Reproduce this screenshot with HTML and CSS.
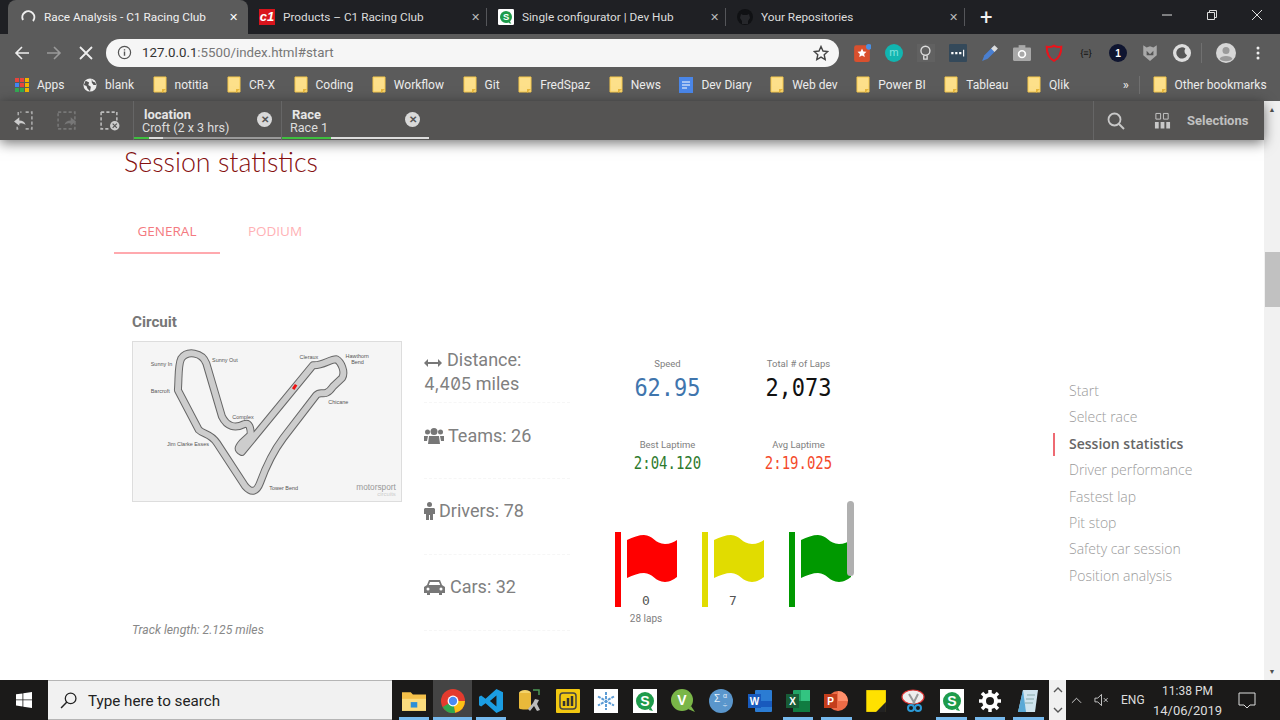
FILE: index.html
```html
<!DOCTYPE html>
<html>
<head>
  <meta charset="UTF-8">
  <title>Race Analysis - C1 Racing Club</title>
  <link rel="stylesheet" href="styles.css">
</head>
<body>
  <svg class="defs" width="0" height="0">
    <symbol id="folder" viewBox="0 0 14 18"><path d="M1 1h8l0 0h4v15H1z" fill="#fde08a" stroke="#f5c84c"/><path d="M9 17l4-4H9z" fill="#e7b73c"/></symbol>
    <symbol id="flagwave" viewBox="0 0 50 47"><path d="M0 5C6 2 12 0 17 0c9 0 11 9 21 9 5 0 9-2 12-4v37c-3 2-7 5-12 5-10 0-12-9-21-9-5 0-11 2-17 5z"/></symbol>
  </svg>

  <div class="tabstrip">
    <div class="tab active">
      <svg class="tab-ico" viewBox="0 0 16 16"><path d="M3 11A6 6 0 1 1 13 12" fill="none" stroke="#eee" stroke-width="2"/></svg>
      <span class="tab-title">Race Analysis - C1 Racing Club</span><span class="tab-x">✕</span>
    </div>
    <div class="tab sep">
      <span class="c1-logo">c1</span>
      <span class="tab-title">Products – C1 Racing Club</span><span class="tab-x">✕</span>
    </div>
    <div class="tab sep">
      <svg class="tab-ico" viewBox="0 0 24 24"><rect width="24" height="24" rx="2" fill="#fff"/><circle cx="12" cy="12" r="9" fill="#1e9b4b"/><path d="M16 21l4 1-3-5z" fill="#1e9b4b"/><text x="12" y="17" text-anchor="middle" font-size="14" font-weight="700" font-family="Liberation Sans" fill="#fff">S</text></svg>
      <span class="tab-title">Single configurator | Dev Hub</span><span class="tab-x">✕</span>
    </div>
    <div class="tab sep">
      <svg class="tab-ico" viewBox="0 0 16 16"><circle cx="8" cy="8" r="8" fill="#101114"/><path d="M5 15v-3L3 9l1-4 2 1h4l2-1 1 4-2 3v3z" fill="#26272b"/></svg>
      <span class="tab-title">Your Repositories</span><span class="tab-x">✕</span>
    </div>
    <span class="new-tab">+</span>
    <div class="win-btns">
      <svg viewBox="0 0 12 12"><path d="M1 6h10" stroke="#ddd"/></svg>
      <svg viewBox="0 0 12 12"><path d="M1.500 3.500h7v7h-7zM3.500 3V1.500h7v7H9" fill="none" stroke="#ddd"/></svg>
      <svg viewBox="0 0 12 12"><path d="M1 1l10 10M11 1L1 11" stroke="#ddd"/></svg>
    </div>
  </div>

  <div class="toolbar">
    <svg class="nav-ico" viewBox="0 0 16 16"><path d="M15 8H2M8 2L2 8l6 6" fill="none" stroke="#eee" stroke-width="1.600"/></svg>
    <svg class="nav-ico" viewBox="0 0 16 16"><path d="M1 8h13M8 2l6 6-6 6" fill="none" stroke="#9a9a9a" stroke-width="1.600"/></svg>
    <svg class="nav-ico" viewBox="0 0 16 16"><path d="M2 2l12 12M14 2L2 14" stroke="#eee" stroke-width="1.800"/></svg>
    <div class="omnibox">
      <svg class="info" viewBox="0 0 16 16"><circle cx="8" cy="8" r="6.500" fill="none" stroke="#555" stroke-width="1.300"/><path d="M8 7v4.500M8 4.500v1.300" stroke="#555" stroke-width="1.500"/></svg>
      <span class="url">127.0.0.1<span class="url-dim">:5500/index.html#start</span></span>
      <svg class="star" viewBox="0 0 16 16"><path d="M8 1.500l2 4.500 4.800.5-3.600 3.200 1 4.800L8 12.100l-4.200 2.400 1-4.800L1.200 6.500 6 6z" fill="none" stroke="#444" stroke-width="1.400"/></svg>
    </div>
    <div class="ext-row">
      <svg viewBox="0 0 16 16"><rect x="1" y="1" width="14" height="15" rx="2" fill="#d9502e"/><path d="M8 4l1.200 2.600 2.800.3-2.100 1.900.6 2.800L8 10.200l-2.500 1.400.6-2.800L4 6.900l2.800-.3z" fill="#fff"/><circle cx="14" cy="2.500" r="2.500" fill="#4a90e2"/></svg>
      <svg viewBox="0 0 16 16"><circle cx="8" cy="8" r="8" fill="#12b5b0"/><text x="8" y="11" text-anchor="middle" font-size="10" fill="#7fe3df" font-family="Liberation Sans">m</text></svg>
      <svg viewBox="0 0 16 16"><rect width="16" height="16" fill="#616161"/><circle cx="7.500" cy="6" r="4" fill="none" stroke="#ddd" stroke-width="1.200"/><path d="M6 10.500v3h3v-3" fill="none" stroke="#ddd" stroke-width="1.200"/></svg>
      <svg viewBox="0 0 16 16"><rect width="16" height="16" rx="1" fill="#34495a"/><path d="M2 8h2M5.500 8h2M9 8h2" stroke="#fff" stroke-width="2"/><path d="M13 5v6" stroke="#fff"/></svg>
      <svg viewBox="0 0 16 16"><path d="M1 15l2-5 8-8 3 3-8 8z" fill="#4a7fd0"/><path d="M9 4l3-3 3 3-3 3z" fill="#ddd"/></svg>
      <svg viewBox="0 0 16 16"><rect y="3" width="16" height="12" rx="1" fill="#a8a8a8"/><rect x="5" y="1" width="6" height="3" fill="#a8a8a8"/><circle cx="8" cy="9" r="3" fill="none" stroke="#fff" stroke-width="1.500"/></svg>
      <svg viewBox="0 0 16 16"><path d="M8 15C3 12.500 1.500 8 1.500 2.500 4 3 6 2.800 8 1.500c2 1.300 4 1.500 6.500 1 0 5.500-1.500 10-6.500 12.500z" fill="none" stroke="#e8141c" stroke-width="1.800"/></svg>
      <span class="ext-text">{≡}</span>
      <svg viewBox="0 0 16 16"><circle cx="8" cy="8" r="8" fill="#0f1530"/><text x="8" y="11.500" text-anchor="middle" font-size="9" font-weight="700" fill="#fff" font-family="Liberation Sans">1</text></svg>
      <svg viewBox="0 0 16 16"><path d="M2 1l3 2 3-1 3 1 3-2v9l-6 5-6-5z" fill="#a9a9a9"/><path d="M5 6l3 3 3-3v4H5z" fill="#555"/></svg>
      <svg viewBox="0 0 16 16"><circle cx="8" cy="8" r="8" fill="#ddd"/><path d="M11 4a5 5 0 1 0 1.500 6A4 4 0 0 1 11 4z" fill="#555"/></svg>
      <span class="ext-sep"></span>
      <svg class="avatar" viewBox="0 0 20 20"><circle cx="10" cy="10" r="10" fill="#d6d6d6"/><circle cx="10" cy="7.500" r="3.500" fill="#9a9a9a"/><path d="M3.500 16c1-4 12-4 13 0-3 3-10 3-13 0z" fill="#9a9a9a"/></svg>
      <svg class="dots" viewBox="0 0 4 16"><circle cx="2" cy="3" r="1.500" fill="#eee"/><circle cx="2" cy="8" r="1.500" fill="#eee"/><circle cx="2" cy="13" r="1.500" fill="#eee"/></svg>
    </div>
  </div>

  <div class="bookmarks">
    <div class="bm bm-first">
      <svg class="bm-ico" viewBox="0 0 14 14"><g><rect width="4" height="4" fill="#e8453c"/><rect x="5" width="4" height="4" fill="#e8453c"/><rect x="10" width="4" height="4" fill="#f4b400"/><rect y="5" width="4" height="4" fill="#4285f4"/><rect x="5" y="5" width="4" height="4" fill="#e8453c"/><rect x="10" y="5" width="4" height="4" fill="#f4b400"/><rect y="10" width="4" height="4" fill="#34a853"/><rect x="5" y="10" width="4" height="4" fill="#34a853"/><rect x="10" y="10" width="4" height="4" fill="#f4b400"/></g></svg>Apps
    </div>
    <div class="bm">
      <svg class="bm-ico" viewBox="0 0 16 16"><circle cx="8" cy="8" r="7.500" fill="#eee"/><path d="M3 3l4 2-1 3 3 2-1 5-3-3-1-3-3-1zM10 1l1 3 3 1 1 3-3 0-2-3z" fill="#555"/></svg>blank
    </div>
    <div class="bm"><svg class="bm-ico"><use href="#folder"/></svg>notitia</div>
    <div class="bm"><svg class="bm-ico"><use href="#folder"/></svg>CR-X</div>
    <div class="bm"><svg class="bm-ico"><use href="#folder"/></svg>Coding</div>
    <div class="bm"><svg class="bm-ico"><use href="#folder"/></svg>Workflow</div>
    <div class="bm"><svg class="bm-ico"><use href="#folder"/></svg>Git</div>
    <div class="bm"><svg class="bm-ico"><use href="#folder"/></svg>FredSpaz</div>
    <div class="bm"><svg class="bm-ico"><use href="#folder"/></svg>News</div>
    <div class="bm">
      <svg class="bm-ico" viewBox="0 0 14 18"><path d="M0 1h14v16H0z" fill="#4a86e8"/><path d="M3 6h8M3 9h8M3 12h5" stroke="#fff"/></svg>Dev Diary
    </div>
    <div class="bm"><svg class="bm-ico"><use href="#folder"/></svg>Web dev</div>
    <div class="bm"><svg class="bm-ico"><use href="#folder"/></svg>Power BI</div>
    <div class="bm"><svg class="bm-ico"><use href="#folder"/></svg>Tableau</div>
    <div class="bm"><svg class="bm-ico"><use href="#folder"/></svg>Qlik</div>
    <span class="bm-more">»</span>
    <div class="bm bm-other"><svg class="bm-ico"><use href="#folder"/></svg>Other bookmarks</div>
  </div>

  <div class="lower">
    <div class="view">
      <div class="qlik-bar">
        <div class="qlik-tools">
          <svg viewBox="0 0 20 20"><path d="M5 5V2h3M12 2h6v16h-6M5 18H4v-2" fill="none" stroke="#aaa" stroke-dasharray="3 2" stroke-width="1.500"/><path d="M1 11l5-4v3c3 0 5 1 6 4-2-1-3-2-6-1v2z" fill="#ccc"/></svg>
          <svg viewBox="0 0 20 20"><path d="M2 2h16v16H2z" fill="none" stroke="#777" stroke-dasharray="3 2" stroke-width="1.500"/><path d="M19 11l-5-4v3c-3 0-5 1-6 4 2-1 3-2 6-1v2z" fill="#777"/></svg>
          <svg viewBox="0 0 20 20"><path d="M2 2h15v9M9 18H2V2" fill="none" stroke="#bbb" stroke-dasharray="3 2" stroke-width="1.500"/><circle cx="15" cy="15" r="4.500" fill="#ccc"/><path d="M13 13l4 4M17 13l-4 4" stroke="#555" stroke-width="1.200"/></svg>
        </div>
        <div class="sel-tab">
          <div class="sel-text"><b>location</b><span>Croft (2 x 3 hrs)</span></div>
          <span class="sel-x">✕</span>
          <div class="sel-bar sel-bar-a"></div>
        </div>
        <div class="sel-tab">
          <div class="sel-text"><b>Race</b><span>Race 1</span></div>
          <span class="sel-x">✕</span>
          <div class="sel-bar sel-bar-b"></div>
        </div>
        <div class="qlik-right">
          <svg class="q-search" viewBox="0 0 18 18"><circle cx="7.500" cy="7.500" r="6" fill="none" stroke="#c8c8c8" stroke-width="1.800"/><path d="M12 12l5 5" stroke="#c8c8c8" stroke-width="2"/></svg>
          <svg class="q-sel" viewBox="0 0 18 18"><path d="M2 1h5v6H2zM10 1h5v6h-5z" fill="none" stroke="#c8c8c8"/><path d="M1 10h4v7H1zM7 10h4v7H7zM13 10h4v7h-4z" fill="#c8c8c8"/></svg>
          <b>Selections</b>
        </div>
      </div>

      <div class="page">
        <h2 class="title">Session statistics</h2>
        <div class="page-tabs">
          <div class="page-tab on">GENERAL</div>
          <div class="page-tab">PODIUM</div>
        </div>

        <div class="panel">
          <div class="circuit">
            <div class="circuit-head">Circuit</div>
            <svg class="map" viewBox="37 20 808 480">
              <rect x="37" y="20" width="808" height="480" fill="#f5f5f5"/>
              <path d="M365 352C352 345 352 340 365 325L392 300C392 280 388 262 372 268 345 282 320 276 305 245L258 85C245 50 200 45 182 70 172 90 175 130 172 165L235 285C250 300 270 295 290 325L375 455C395 478 410 472 420 445 440 390 460 350 490 310L590 180C605 165 615 190 640 155L668 128C678 110 665 80 650 72 630 72 610 92 580 90Z" fill="none" stroke="#666" stroke-width="24" stroke-linejoin="round"/>
              <path d="M365 352C352 345 352 340 365 325L392 300C392 280 388 262 372 268 345 282 320 276 305 245L258 85C245 50 200 45 182 70 172 90 175 130 172 165L235 285C250 300 270 295 290 325L375 455C395 478 410 472 420 445 440 390 460 350 490 310L590 180C605 165 615 190 640 155L668 128C678 110 665 80 650 72 630 72 610 92 580 90Z" fill="none" stroke="#cdcdcd" stroke-width="18" stroke-linejoin="round"/>
              <path d="M520 162l9-13" stroke="#ee1111" stroke-width="9"/>
              <g class="map-labels">
                <text x="90" y="91">Sunny In</text>
                <text x="275" y="79">Sunny Out</text>
                <text x="90" y="173">Barcroft</text>
                <text x="336" y="252">Complex</text>
                <text x="539" y="72">Cleraux</text>
                <text x="678" y="69">Hawthorn</text>
                <text x="695" y="86">Bend</text>
                <text x="626" y="208">Chicane</text>
                <text x="139" y="333">Jim Clarke Esses</text>
                <text x="448" y="468">Tower Bend</text>
              </g>
              <text class="map-brand" x="830" y="466" text-anchor="end">motorsport</text>
              <text class="map-brand2" x="830" y="485" text-anchor="end">circuits</text>
            </svg>
            <div class="track-len">Track length: 2.125 miles</div>
          </div>

          <div class="stats">
            <div class="stat stat-first">
              <svg class="s-ico s-arrow" viewBox="0 0 18 10"><path d="M0 5l4-4v3h10V1l4 4-4 4V6H4v3z" fill="#777"/></svg>Distance:<br><span class="num">4,405</span> miles
            </div>
            <div class="stat">
              <svg class="s-ico s-team" viewBox="0 0 20 17"><circle cx="10" cy="4.500" r="3.500" fill="#777"/><circle cx="3.500" cy="5" r="2.500" fill="#777"/><circle cx="16.500" cy="5" r="2.500" fill="#777"/><path d="M5 9h10l1 8H4zM0 9h4l-1 5H0zM16 9h4v5h-3z" fill="#777"/></svg>Teams: 26
            </div>
            <div class="stat">
              <svg class="s-ico s-man" viewBox="0 0 11 18"><circle cx="5.500" cy="2.500" r="2.500" fill="#777"/><path d="M1 6h9l1 1v5H9v6H6v-5H5v5H2v-6H0V7z" fill="#777"/></svg>Drivers: 78
            </div>
            <div class="stat">
              <svg class="s-ico s-car" viewBox="0 0 21 16"><path d="M5 1h11l2 5 3 2v6h-3v2h-3v-2H6v2H3v-2H0V8l3-2z" fill="#777"/><path d="M6 3h9l1.200 3H4.800z" fill="#fff"/><circle cx="4" cy="10" r="1.500" fill="#fff"/><circle cx="17" cy="10" r="1.500" fill="#fff"/></svg>Cars: 32
            </div>
          </div>

          <div class="kpis">
            <div class="kpi-grid">
              <div class="kpi"><div class="kpi-label">Speed</div><div class="kpi-big blue">62.95</div></div>
              <div class="kpi"><div class="kpi-label">Total # of Laps</div><div class="kpi-big">2,073</div></div>
              <div class="kpi"><div class="kpi-label">Best Laptime</div><div class="kpi-small green">2:04.120</div></div>
              <div class="kpi"><div class="kpi-label">Avg Laptime</div><div class="kpi-small red">2:19.025</div></div>
            </div>
            <div class="flags">
              <div class="flag flag-red">
                <div class="pole"></div>
                <div class="flag-body">
                  <svg class="wave"><use href="#flagwave"/></svg>
                  <div class="flag-num">0</div>
                  <div class="flag-sub">28 laps</div>
                </div>
              </div>
              <div class="flag flag-yellow">
                <div class="pole"></div>
                <div class="flag-body">
                  <svg class="wave"><use href="#flagwave"/></svg>
                  <div class="flag-num">7</div>
                </div>
              </div>
              <div class="flag flag-green">
                <div class="pole"></div>
                <div class="flag-body">
                  <svg class="wave"><use href="#flagwave"/></svg>
                </div>
              </div>
              <div class="flags-thumb"></div>
            </div>
          </div>

          <ul class="side-nav">
            <li>Start</li>
            <li>Select race</li>
            <li class="current">Session statistics</li>
            <li>Driver performance</li>
            <li>Fastest lap</li>
            <li>Pit stop</li>
            <li>Safety car session</li>
            <li>Position analysis</li>
          </ul>
        </div>
      </div>
    </div>

    <div class="scrollbar">
      <span class="sb-arrow">▲</span>
      <div class="sb-thumb"></div>
      <span class="sb-arrow sb-down">▼</span>
    </div>
  </div>

  <div class="taskbar">
    <div class="start">
      <svg viewBox="0 0 16 16"><path d="M0 2.300l6.500-.9v6.100H0zM7.300 1.300L16 0v7.500H7.300zM0 8.300h6.500v6.200L0 13.600zM7.300 8.300H16V16l-8.700-1.200z" fill="#fff"/></svg>
    </div>
    <div class="search">
      <svg viewBox="0 0 16 16"><circle cx="10" cy="6" r="5" fill="none" stroke="#222" stroke-width="1.200"/><path d="M6.500 9.500L1 15" stroke="#222" stroke-width="1.400"/></svg>
      <span>Type here to search</span>
    </div>
    <div class="task-icons">
      <div class="ti on"><svg viewBox="0 0 22 20"><path d="M0 2h8l2 2h12v15H0z" fill="#f4c04a"/><path d="M0 8h22v11H0z" fill="#fbdc7e"/><path d="M8 11h6v5H8z" fill="#2a8fd8"/></svg></div>
      <div class="ti on hot"><svg viewBox="0 0 22 22"><circle cx="11" cy="11" r="11" fill="#e33b2e"/><path d="M11 11L1.500 16.500A11 11 0 0 0 13 21.800z" fill="#2fa84f"/><path d="M11 11h11a11 11 0 0 1-9 10.800z" fill="#fbc116"/><circle cx="11" cy="11" r="5" fill="#fff"/><circle cx="11" cy="11" r="3.800" fill="#4a8af4"/></svg></div>
      <div class="ti on"><svg viewBox="0 0 22 22"><path d="M16 0l6 3v16l-6 3L6 13l-4 3-2-1V7l2-1 4 3zM16 6l-6 5 6 5z" fill="#1b9de2"/></svg></div>
      <div class="ti"><svg viewBox="0 0 24 24"><ellipse cx="8" cy="4" rx="6" ry="3" fill="#f4d36a"/><path d="M2 4v15c0 2 12 2 12 0V4z" fill="#e9b93a"/><path d="M18 10l4 1-2 4 3 6-3 1-3-5-4 5-2-2 5-6z" fill="#bbb"/><path d="M16 1h6v5" fill="none" stroke="#4d9a55" stroke-width="1.500"/></svg></div>
      <div class="ti"><svg viewBox="0 0 24 24"><rect width="24" height="24" rx="1" fill="#f2c811"/><rect x="4" y="4" width="16" height="16" rx="3" fill="none" stroke="#444" stroke-width="1.500"/><path d="M8 12v5M12 9v8M16 7v10" stroke="#333" stroke-width="2.500"/></svg></div>
      <div class="ti"><svg viewBox="0 0 24 24"><rect width="24" height="24" fill="#fff"/><path d="M12 3v18M4 7.500l16 9M20 7.500l-16 9" stroke="#5b9bd5" stroke-width="2" stroke-dasharray="3 1"/></svg></div>
      <div class="ti"><svg viewBox="0 0 24 24"><rect width="24" height="24" fill="#fff"/><circle cx="12" cy="12" r="9" fill="#1e9b4b"/><path d="M16 21l4 1-3-5z" fill="#1e9b4b"/><text x="12" y="17" text-anchor="middle" font-size="14" font-weight="700" font-family="Liberation Sans" fill="#fff">S</text></svg></div>
      <div class="ti"><svg viewBox="0 0 24 24"><circle cx="11" cy="11" r="11" fill="#7ab648"/><path d="M20 17l4 6-7-3z" fill="#7ab648"/><text x="11" y="16" text-anchor="middle" font-size="14" font-weight="700" fill="#fff" font-family="Liberation Sans">V</text></svg></div>
      <div class="ti"><svg viewBox="0 0 24 24"><circle cx="12" cy="12" r="12" fill="#5a96cc"/><text x="8" y="13" text-anchor="middle" font-size="10" fill="#e8f2fa" font-family="Liberation Sans">Σ</text><text x="16" y="9" text-anchor="middle" font-size="7" fill="#e8f2fa" font-family="Liberation Sans">α</text><text x="16" y="19" text-anchor="middle" font-size="8" fill="#e8f2fa" font-family="Liberation Sans">÷</text></svg></div>
      <div class="ti"><svg viewBox="0 0 24 24"><rect x="7" y="1" width="17" height="22" rx="1" fill="#2b7cd3"/><rect x="7" y="12" width="17" height="6" fill="#185abd"/><rect y="5" width="13" height="14" fill="#185abd"/><text x="6.500" y="16" text-anchor="middle" font-size="10" font-weight="700" fill="#fff" font-family="Liberation Sans">W</text></svg></div>
      <div class="ti on"><svg viewBox="0 0 24 24"><rect x="7" y="1" width="17" height="22" rx="1" fill="#21a366"/><rect x="15" y="1" width="9" height="11" fill="#33c481"/><rect x="7" y="12" width="17" height="11" fill="#107c41"/><rect y="5" width="13" height="14" fill="#185c37"/><text x="6.500" y="16" text-anchor="middle" font-size="10" font-weight="700" fill="#fff" font-family="Liberation Sans">X</text></svg></div>
      <div class="ti on"><svg viewBox="0 0 24 24"><circle cx="14" cy="12" r="10" fill="#ed6c47"/><path d="M14 2a10 10 0 0 1 10 10H14z" fill="#ff8f6b"/><rect y="5" width="13" height="14" fill="#c43e1c"/><text x="6.500" y="16" text-anchor="middle" font-size="10" font-weight="700" fill="#fff" font-family="Liberation Sans">P</text></svg></div>
      <div class="ti"><svg viewBox="0 0 20 22"><path d="M2 1h18v20H2z" fill="#ffe100"/><path d="M20 12v9h-9z" fill="#222"/></svg></div>
      <div class="ti"><svg viewBox="0 0 24 24"><ellipse cx="12" cy="8" rx="11" ry="7" fill="#eee" stroke="#d33" stroke-width="1.200"/><path d="M8 5l6 10M17 5l-5 10" stroke="#999" stroke-width="2"/><circle cx="10" cy="19" r="3" fill="none" stroke="#2c9ad6" stroke-width="2"/><circle cx="17" cy="19" r="3" fill="none" stroke="#2c9ad6" stroke-width="2"/></svg></div>
      <div class="ti on"><svg viewBox="0 0 24 24"><rect width="24" height="24" fill="#fff"/><circle cx="12" cy="12" r="9" fill="#1e9b4b"/><path d="M16 21l4 1-3-5z" fill="#1e9b4b"/><text x="12" y="17" text-anchor="middle" font-size="14" font-weight="700" font-family="Liberation Sans" fill="#fff">S</text></svg></div>
      <div class="ti on"><svg viewBox="0 0 24 24"><circle cx="12" cy="12" r="6" fill="none" stroke="#fff" stroke-width="4"/><path d="M12 1v5M12 18v5M1 12h5M18 12h5M4 4l3.500 3.500M16.500 16.500L20 20M20 4l-3.500 3.500M7.500 16.500L4 20" stroke="#fff" stroke-width="3.500"/></svg></div>
      <div class="ti on"><svg viewBox="0 0 24 24"><path d="M7 1h15l-3 22H2z" fill="#cfe4ee"/><path d="M7 1l-5 22h8z" fill="#5aa9d6"/><path d="M11 6h8M10 10h8M9 14h8" stroke="#8aa"/></svg></div>
    </div>
    <div class="task-scroll">
      <svg viewBox="0 0 10 6"><path d="M1 5l4-4 4 4" fill="none" stroke="#555" stroke-width="1.400"/></svg>
      <svg viewBox="0 0 10 6"><path d="M1 1l4 4 4-4" fill="none" stroke="#555" stroke-width="1.400"/></svg>
    </div>
    <div class="tray">
      <svg class="t-up" viewBox="0 0 12 7"><path d="M1 6l5-5 5 5" fill="none" stroke="#ddd"/></svg>
      <svg class="t-vol" viewBox="0 0 16 14"><path d="M1 5h3l4-4v12L4 9H1z" fill="none" stroke="#ccc"/><path d="M10.500 5l4 4M14.500 5l-4 4" stroke="#ccc"/></svg>
      <span class="t-lang">ENG</span>
      <div class="t-clock"><span>11:38 PM</span><span class="t-date">14/06/2019</span></div>
      <svg class="t-note" viewBox="0 0 18 18"><path d="M1 2h16v12h-5l-3 3-3-3H1z" fill="none" stroke="#ddd"/></svg>
    </div>
  </div>
</body>
</html>
```

FILE: styles.css
```css
/* page frame */
* {
  box-sizing: border-box;
}
html, body {
  margin: 0;
  height: 720px;
  overflow: hidden;
  background: #fff;
  font-family: "Roboto", "Liberation Sans", sans-serif;
}
.defs {
  position: absolute;
}

/* browser tabs */
.tabstrip {
  display: flex;
  align-items: center;
  height: 34px;
  padding-left: 8px;
  background: #1f2024;
  color: #e4e4e4;
  font-size: 11.800px;
}
.tab {
  display: flex;
  align-items: center;
  position: relative;
  width: 239px;
  height: 34px;
  padding: 0 0 0 11px;
  color: #dcdcdc;
}
.tab.active {
  width: 240px;
  padding-left: 12px;
  background: #5b5b5b;
  border-radius: 8px 8px 0 0;
  color: #f0f0f0;
}
.tab.sep::before {
  content: "";
  position: absolute;
  right: 0;
  top: 8px;
  height: 18px;
  border-right: 1px solid #55565a;
}
.tab-ico {
  width: 16px;
  height: 16px;
  margin-right: 8px;
  flex: none;
}
.tab-title {
  flex: 1;
  white-space: nowrap;
}
.tab-x {
  font-size: 11px;
  color: #bbb;
  margin-right: 7px;
}
.tab.active .tab-x {
  margin-right: 10px;
  color: #fff;
}
.c1-logo {
  width: 16px;
  height: 16px;
  margin-right: 8px;
  background: #d9141c;
  color: #fff;
  font: italic 700 13px/16px "Liberation Sans", sans-serif;
  text-align: center;
}
.new-tab {
  margin-left: 15px;
  font-size: 22px;
  font-weight: 400;
  color: #f2f2f2;
}
.win-btns {
  display: flex;
  gap: 33px;
  margin-left: auto;
  padding-right: 17px;
  padding-bottom: 5px;
}
.win-btns svg {
  width: 12px;
  height: 12px;
}

/* address bar */
.toolbar {
  display: flex;
  align-items: center;
  height: 35px;
  padding: 2px 0 0 14px;
  background: #5b5b5b;
}
.nav-ico {
  width: 16px;
  height: 16px;
  margin-right: 16px;
}
.omnibox {
  display: flex;
  align-items: center;
  width: 733px;
  height: 28px;
  margin-left: -4px;
  padding: 0 10px 0 11px;
  border-radius: 14px;
  background: #f6f6f6;
  color: #333;
  font-size: 13.300px;
}
.info {
  width: 15px;
  height: 15px;
  margin-right: 10px;
}
.url-dim {
  color: #777;
}
.star {
  width: 16px;
  height: 16px;
  margin-left: auto;
}
.ext-row {
  display: flex;
  align-items: center;
  gap: 14px;
  margin-left: 14px;
}
.ext-row svg {
  width: 18px;
  height: 18px;
}
.ext-text {
  width: 18px;
  font-size: 9px;
  color: #111;
  text-align: center;
}
.ext-sep {
  height: 20px;
  margin: 0 0 0 -4px;
  border-right: 1px solid #707070;
}
.ext-row .avatar {
  width: 20px;
  height: 20px;
}
.ext-row .dots {
  width: 4px;
  height: 16px;
  margin-left: 6px;
}

/* bookmarks */
.bookmarks {
  display: flex;
  align-items: center;
  gap: 18.600px;
  height: 32px;
  padding: 0 0 1px 15px;
  background: #5b5b5b;
  color: #ececec;
  font-size: 12px;
  white-space: nowrap;
}
.bm {
  display: flex;
  align-items: center;
}
.bm-ico {
  width: 14px;
  height: 18px;
  margin-right: 8px;
}
.bm-first .bm-ico {
  height: 14px;
}
.bm-more {
  margin-left: 35px;
  font-size: 13px;
}
.bm-other {
  margin-left: -9px;
  padding-left: 13px;
  border-left: 1px solid #707070;
}

/* qlik selection bar and content */
.lower {
  display: flex;
  height: 579px;
}
.view {
  flex: 1;
  display: flex;
  flex-direction: column;
  min-width: 0;
}
.qlik-bar {
  display: flex;
  position: relative;
  z-index: 2;
  height: 39px;
  background: #555453;
  color: #ddd;
  box-shadow: 0 3px 12px rgba(0, 0, 0, .55);
}
.qlik-tools {
  display: flex;
  align-items: center;
  gap: 22px;
  width: 133px;
  padding-left: 13px;
}
.qlik-tools svg {
  width: 21px;
  height: 21px;
}
.sel-tab {
  display: flex;
  align-items: center;
  position: relative;
  width: 148px;
  padding: 0 9px 0 8px;
  border-left: 1px solid #666;
  font-size: 12.600px;
}
.sel-text {
  display: flex;
  flex-direction: column;
  flex: 1;
  line-height: 13px;
}
.sel-text b {
  padding-left: 2px;
  font-size: 13px;
  color: #e6e6e6;
}
.sel-x {
  width: 15px;
  height: 15px;
  margin-bottom: 3px;
  border-radius: 50%;
  background: #d9d9d9;
  color: #555;
  font-size: 10px;
  line-height: 15px;
  font-weight: 700;
  text-align: center;
}
.sel-bar {
  position: absolute;
  left: 0;
  right: 0;
  bottom: 1px;
  height: 2px;
}
.sel-bar-a {
  background: linear-gradient(90deg, #3fbf3f 15px, #ddd 15px, #ddd 29px, #9a9a9a 29px);
}
.sel-bar-b {
  background: linear-gradient(90deg, #3fbf3f 49px, #ddd 49px);
}
.qlik-right {
  display: flex;
  align-items: center;
  margin-left: auto;
  width: 171px;
  padding-left: 13px;
  border-left: 1px solid #666;
  font-size: 13px;
  color: #c0c0c0;
}
.q-search {
  width: 18px;
  height: 18px;
}
.q-sel {
  width: 17px;
  height: 18px;
  margin: 0 16px 0 29px;
}

.page {
  flex: 1;
  overflow: hidden;
  background: #fff;
}
.title {
  margin: 0;
  padding-left: 124px;
  font: 300 26.800px/44px "Lato", sans-serif;
  color: #860f0f;
}
.page-tabs {
  display: flex;
  margin: 24px 0 0 114px;
}
.page-tab {
  width: 106px;
  height: 46px;
  font-family: "Open Sans", sans-serif;
  font-size: 13.500px;
  line-height: 46px;
  text-align: center;
  color: #ffb1b5;
}
.page-tab.on {
  color: #f47a80;
  border-bottom: 2px solid #ffa9ae;
}
.page-tab + .page-tab {
  width: 110px;
}

.panel {
  display: flex;
  height: 326px;
  margin: 58px 0 0 132px;
}
.circuit {
  display: flex;
  flex-direction: column;
  width: 270px;
  flex: none;
}
.circuit-head {
  height: 18px;
  padding-top: 1px;
  font-size: 15.200px;
  font-weight: 700;
  line-height: 18px;
  color: #777;
}
.map {
  display: block;
  width: 270px;
  height: 161px;
  margin-top: 11px;
  border: 1px solid #ddd;
}
.map-labels {
  font: 16.500px "Liberation Sans", sans-serif;
  fill: #555;
}
.map-brand {
  font: 25px "Liberation Sans", sans-serif;
  fill: #999;
}
.map-brand2 {
  font: 18px "Liberation Sans", sans-serif;
  fill: #ccc;
}
.track-len {
  margin-top: auto;
  padding-bottom: 1px;
  font-size: 12.200px;
  font-style: italic;
  line-height: 14px;
  color: #888;
}

.stats {
  width: 146px;
  flex: none;
  margin-left: 22px;
  padding-top: 36px;
  font-size: 18px;
  line-height: 24px;
  color: #808080;
}
.stat {
  height: 76px;
  padding-top: 20px;
  border-bottom: 1px dashed #f6f6f6;
  white-space: nowrap;
}
.stat-first {
  height: 55px;
  padding-top: 0;
}
.stat:nth-child(2) {
  padding-top: 21px;
}
.num {
  font-family: "Inter", sans-serif;
  font-size: 17px;
  font-feature-settings: "zero";
}
.s-ico {
  margin-right: 5px;
  vertical-align: -2px;
}
.s-arrow {
  width: 18px;
  height: 10px;
}
.s-team {
  width: 20px;
  height: 17px;
  margin-right: 4px;
}
.s-man {
  width: 11px;
  height: 18px;
  margin-right: 4px;
  vertical-align: -3px;
}
.s-car {
  width: 21px;
  height: 16px;
}

.kpis {
  width: 262px;
  flex: none;
  margin-left: 32px;
  padding-top: 45px;
}
.kpi-grid {
  display: grid;
  grid-template-columns: 131px 131px;
  row-gap: 35px;
}
.kpi {
  text-align: center;
}
.kpi-label {
  font-size: 9.500px;
  line-height: 14px;
  color: #808080;
}
.kpi-big {
  margin-top: 2px;
  font: 22px/30px "DejaVu Sans Mono", monospace;
  color: #111;
  transform: scaleY(1.130);
}
.kpi-small {
  margin-top: 1px;
  font: 14px/20px "DejaVu Sans Mono", monospace;
  transform: scaleY(1.200);
}
.blue {
  color: #3f75ad;
}
.green {
  color: #2d7a2d;
}
.red {
  color: #f4492b;
}

.flags {
  display: flex;
  position: relative;
  gap: 24px;
  width: 236px;
  margin: 59px 0 0 13px;
}
.flag {
  display: flex;
  gap: 6px;
  width: 63px;
  flex: none;
}
.pole {
  width: 6px;
  height: 75px;
  flex: none;
}
.flag-body {
  width: 50px;
  padding-top: 3px;
}
.wave {
  display: block;
  width: 50px;
  height: 47px;
}
.flag-red .pole {
  background: #f00;
}
.flag-red .wave {
  fill: #f00;
}
.flag-yellow .pole {
  background: #e1dc00;
}
.flag-yellow .wave {
  fill: #e1dc00;
}
.flag-green .pole {
  background: #090;
}
.flag-green .wave {
  fill: #090;
}
.flag-num {
  width: 38px;
  margin-top: 10px;
  font: 13px/18px "DejaVu Sans Mono", monospace;
  color: #555;
  text-align: center;
}
.flag-sub {
  width: 38px;
  margin-top: 2px;
  font-size: 10px;
  line-height: 14px;
  color: #808080;
  text-align: center;
  white-space: nowrap;
}
.flags-thumb {
  position: absolute;
  top: -31px;
  left: 232px;
  width: 7px;
  height: 75px;
  border-radius: 4px;
  background: #b0b0b0;
}

.side-nav {
  position: relative;
  margin: 66px 0 0 189px;
  padding: 0 0 0 16px;
  list-style: none;
  font: 300 14px/26.400px "Open Sans", sans-serif;
  color: #9a9a9a;
  white-space: nowrap;
}
.side-nav .current {
  position: relative;
  font-weight: 600;
  color: #666;
}
.side-nav .current::before {
  content: "";
  position: absolute;
  left: -16px;
  top: 2px;
  width: 2px;
  height: 23px;
  background: #ee6a72;
}

.scrollbar {
  display: flex;
  flex-direction: column;
  align-items: center;
  width: 16px;
  background: #f1f1f1;
  color: #505050;
  font-size: 7px;
}
.sb-arrow {
  height: 17px;
  padding-top: 1px;
  line-height: 17px;
}
.sb-thumb {
  width: 15px;
  height: 55px;
  margin-top: 134px;
  background: #c1c1c1;
}
.sb-down {
  margin-top: auto;
}

/* windows taskbar */
.taskbar {
  display: flex;
  height: 40px;
  background: #1b1a19;
  color: #eee;
}
.start {
  display: flex;
  align-items: center;
  justify-content: center;
  width: 48px;
}
.start svg {
  width: 16px;
  height: 16px;
}
.search {
  display: flex;
  align-items: center;
  width: 344px;
  padding-left: 12px;
  background: #f1f1f1;
  border: 1px solid #b5b5b5;
  border-width: 1px 0;
  color: #222;
  font-size: 15.200px;
}
.search span {
  padding-top: 2px;
}
.search svg {
  width: 17px;
  height: 17px;
  margin-right: 11px;
}
.task-icons {
  display: flex;
  width: 657px;
  padding-left: 3px;
}
.ti {
  display: flex;
  align-items: center;
  justify-content: center;
  width: 38.400px;
  flex: none;
  padding-top: 1px;
  position: relative;
}
.ti svg {
  width: 24px;
  height: 24px;
}
.ti.hot {
  background: #444;
}
.ti.on::after {
  content: "";
  position: absolute;
  left: 4px;
  right: 4px;
  bottom: 0;
  height: 3px;
  background: #76b9ed;
}
.ti.hot::after {
  left: 0;
  right: 0;
}
.task-scroll {
  display: flex;
  flex-direction: column;
  align-items: center;
  justify-content: space-between;
  width: 17px;
  padding: 7px 0;
  background: #f0f0f0;
}
.task-scroll svg {
  width: 10px;
  height: 6px;
}
.tray {
  display: flex;
  align-items: center;
  flex: 1;
  padding-left: 5px;
  font-size: 12px;
  color: #ddd;
}
.t-up {
  width: 11px;
  height: 7px;
}
.t-vol {
  width: 15px;
  height: 14px;
  margin-left: 12px;
}
.t-lang {
  margin-left: 12px;
}
.t-clock {
  display: flex;
  flex-direction: column;
  align-items: center;
  width: 70px;
  margin-left: 8px;
  padding-top: 1px;
  line-height: 19px;
}
.t-date {
  font-size: 13px;
}
.t-note {
  width: 18px;
  height: 18px;
  margin-left: 15px;
}
```
